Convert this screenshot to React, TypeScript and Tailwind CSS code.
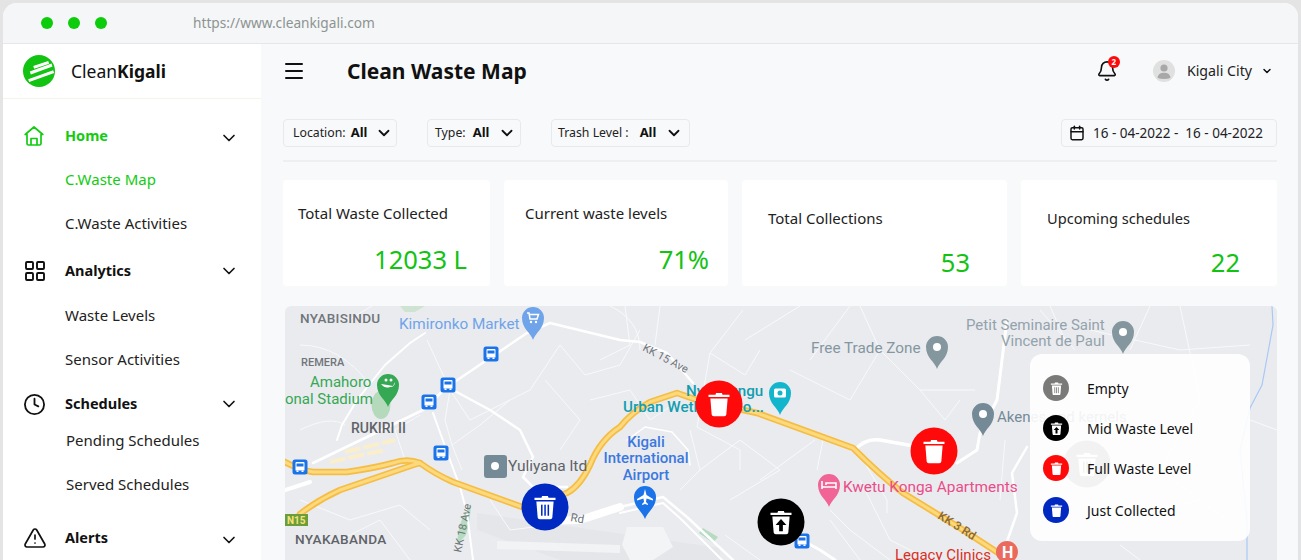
import React from 'react'
import { Bell, Calendar, ChevronDown, Clock, LayoutGrid, Menu, TriangleAlert } from 'lucide-react'

const navRows = [
  { label: 'Home', kind: 'head', active: true, icon: 'home', cls: 'h-[44px]', low: true },
  { label: 'C.Waste Map', kind: 'sub', active: true, cls: 'h-[44px]' },
  { label: 'C.Waste Activities', kind: 'sub', cls: 'h-[44px]' },
  { label: 'Analytics', kind: 'head', icon: 'grid', cls: 'h-[44px] mt-[3px]' },
  { label: 'Waste Levels', kind: 'sub', cls: 'h-[44px] mt-[1px]' },
  { label: 'Sensor Activities', kind: 'sub', cls: 'h-[44px]' },
  { label: 'Schedules', kind: 'head', icon: 'clock', cls: 'h-[44px]' },
  { label: 'Pending Schedules', kind: 'sub', cls: 'h-[30px]', nudge: true },
  { label: 'Served Schedules', kind: 'sub', cls: 'h-[44px] mt-[7px]', nudge: true },
  { label: 'Alerts', kind: 'head', icon: 'alert', cls: 'h-[44px] mt-[9px]', low: true },
]

const stats = [
  { title: 'Total Waste Collected', value: '12033 L', cls: 'w-[207px] pl-[15px] pr-[23px] pt-[23px]', gap: 'mt-[20px]', size: 'text-[15px]' },
  { title: 'Current waste levels', value: '71%', cls: 'w-[224px] pl-[21px] pr-[19px] pt-[23px]', gap: 'mt-[20px]', size: 'text-[15px]' },
  { title: 'Total Collections', value: '53', cls: 'w-[265px] pl-[26px] pr-[37px] pt-[28px]', gap: 'mt-[18px]', size: 'text-[15px]' },
  { title: 'Upcoming schedules', value: '22', cls: 'w-[256px] pl-[26px] pr-[37px] pt-[28px]', gap: 'mt-[18px]', size: 'text-[14.6px]' },
]

const busStops = [[491, 354], [448, 385], [429, 402], [441, 453], [300, 467], [802, 541]]

const HIGHWAY = 'M285 462 Q300 470 313 472 L347 472 Q375 468 393 463 Q407 458 420 463 Q435 474 453 482 L525 508 L567 493 Q580 486 590 465 Q600 440 620 427 Q632 412 650 402 L677 393 L697 400 L757 413 L853 448 Q880 475 903 493 L960 528 L1003 556'
const BRANCH = 'M300 514 Q318 500 340 490 L413 465 L420 463'

const thinRoads = [
  'M345 322 L372 306',
  'M427 340 L450 390 L470 420 L530 390 L560 345',
  'M450 390 L445 420 L452 445 L480 425 L510 400',
  'M452 445 L462 470',
  'M405 460 L395 430 L420 415',
  'M300 345 Q340 345 370 385',
  'M300 430 Q330 415 345 425',
  'M560 345 L585 375 L620 365 L640 330',
  'M590 400 L630 390 L650 420 L680 400',
  'M600 360 L630 345 L625 306',
  'M545 380 L580 420 L560 450',
  'M300 500 L350 520 L400 505 L430 530',
  'M340 540 L380 520 L410 560',
  'M490 500 L510 530 L590 520',
  'M610 306 Q640 320 640 350',
  'M660 306 L655 345',
  'M697 427 L710 353 L743 310',
  'M745 340 L800 306',
  'M710 353 L745 375 L760 350',
  'M790 370 L850 400 L880 350 L920 390 L975 390',
  'M810 360 L850 306',
  'M880 350 L860 306',
  'M700 470 L740 440 L780 470 L730 500',
  'M697 427 L740 450 L740 470',
  'M760 480 L815 440',
  'M823 440 L817 470',
  'M690 430 L700 470 L680 490',
  'M725 535 L760 560',
  'M830 520 L860 560',
  'M863 460 L887 500 L887 513',
  'M860 480 L890 540 L930 560',
  'M830 510 L850 530 L890 560',
  'M920 390 L945 420 L960 400',
  'M1040 310 L1075 350',
  'M1090 330 L1180 350 L1250 345',
  'M1180 306 L1200 400 L1160 470 L1240 530',
  'M1100 520 L1200 500',
  'M1000 500 L1005 440',
  'M1050 306 L1065 340',
  'M1150 306 L1130 350',
  'M1250 420 L1277 430',
  'M1120 545 L1140 560',
]

function Trash({ kind, size, dark }: { kind: 'plain' | 'bars' | 'up'; size: number; dark: string }) {
  return (
    <svg width={size} height={size} viewBox="0 0 24 24" fill="#fff">
      <path d="M9.5 2.5h5l.5 1.5h6v2H3V4h6z" />
      <path d="M4.6 7.2h14.8l-1.1 13.6c-.1 1-.8 1.7-1.8 1.7H7.5c-1 0-1.7-.7-1.8-1.7z" />
      {kind === 'bars' && (
        <g fill={dark}>
          <rect x="8.6" y="10" width="1.3" height="9.5" />
          <rect x="11.4" y="10" width="1.3" height="9.5" />
          <rect x="14.2" y="10" width="1.3" height="9.5" />
        </g>
      )}
      {kind === 'up' && <path fill={dark} d="M12 9.5l4.6 5h-3v5.5h-3.2v-5.5h-3z" />}
    </svg>
  )
}

function Marker({ x, y, color, kind }: { x: number; y: number; color: string; kind: 'plain' | 'bars' | 'up' }) {
  return (
    <g transform={`translate(${x - 23.5} ${y - 23.5})`}>
      <circle cx="23.5" cy="23.5" r="23.5" fill={color} />
      <g transform="translate(9.5 9.5)">
        <Trash kind={kind} size={28} dark={color} />
      </g>
    </g>
  )
}

function Pin({ x, y, color, children }: { x: number; y: number; color: string; children?: React.ReactNode }) {
  return (
    <g transform={`translate(${x} ${y})`}>
      <path d="M0 22 C-2 15 -11 11 -11 0 A11 11 0 0 1 11 0 C11 11 2 15 0 22Z" fill={color} />
      {children ?? <circle r="4" fill="#fff" />}
    </g>
  )
}

function MapDrawing() {
  return (
    <svg className="w-full h-full block" viewBox="285 306 992 254">
      <rect x="285" y="306" width="992" height="254" fill="#eaebef" />
      <path d="M477 513 L720 548 L720 560 L560 560 L477 530Z" fill="#e5e6ea" />
      <path d="M497 545 L620 549" stroke="#f2f3f5" strokeWidth="8" fill="none" />
      <path d="M627 527 L663 527 L673 547 L653 560 L630 560 L622 545Z" fill="#f3f4f6" />
      <path d="M400 306 h25 l-10 6 h-10z" fill="#cfe3d3" />
      <path d="M466 535 Q472 512 470 505 Q458 520 457 545Z" fill="#b5dcc0" />
      <path d="M703 528 L718 537 L713 543 L699 533Z" fill="#b5dcc0" />
      <ellipse cx="381" cy="405" rx="9.5" ry="14" fill="#b5d9bb" />
      <path d="M345 452 L395 440 M330 462 L385 450" stroke="#fbeecb" strokeWidth="4" strokeDasharray="16 3" fill="none" />

      <g fill="none" stroke="#f8f9fa" strokeWidth="1">
        {thinRoads.map((d, i) => <path key={i} d={d} />)}
      </g>

      <g fill="none" stroke="#fff" strokeLinecap="round" strokeLinejoin="round" strokeWidth="2.5">
        <path d="M337 440 L342 425 L357 400 L385 365 L410 343 L425 333" strokeWidth="2" />
        <path d="M313 463 L423 410 L447 387 L487 360 L527 333 L550 323 L620 340 L640 342 L667 353 L693 383" />
        <path d="M453 390 L490 410 L520 430 L533 457 L523 477 L533 487 L567 487" />
        <path d="M433 413 L450 460 L460 487 L467 513 L473 560" strokeWidth="2" />
        <path d="M285 490 L310 482" strokeWidth="4" />
        <path d="M573 520 L620 507 L663 497 L687 517 L733 560" />
        <path d="M620 513 L663 503 L682 520 L722 560" strokeWidth="2" />
        <path d="M627 440 L645 427 L672 432 L688 450 L690 465" strokeWidth="1.5" />
        <path d="M1007 320 L997 400 L980 433 L977 450 L957 463" strokeWidth="3" />
        <path d="M855 450 Q865 438 880 440 L925 448" strokeWidth="3.5" />
        <path d="M1027 447 L1012 473 L1017 513 L1010 533 L1000 560" strokeWidth="2.5" />
        <path d="M802 540 L820 550 L835 560" strokeWidth="3" />
      </g>

      <path d="M1272 306 L1273 325 L1262 385 L1250 408 L1240 450 L1247 520 L1247 560" fill="none" stroke="#a9c8f5" strokeWidth="1.2" />

      <g fill="none" stroke="#f5bd44" strokeWidth="6.5" strokeLinejoin="round" strokeLinecap="round">
        <path d={HIGHWAY} />
        <path d={BRANCH} />
      </g>
      <g fill="none" stroke="#fdd97e" strokeWidth="3" strokeLinejoin="round" strokeLinecap="round">
        <path d={HIGHWAY} />
        <path d={BRANCH} />
      </g>
      <path d="M540 521 L580 520 L620 507" stroke="#fff" strokeWidth="8" strokeLinecap="round" fill="none" />
      <path d="M285 514 h23 v12 h-23z" fill="#6b9e3a" />

      {busStops.map(([x, y]) => (
        <g key={`${x}-${y}`} transform={`translate(${x} ${y})`}>
          <rect x="-7.5" y="-7.5" width="15" height="15" rx="2.5" fill="#1a73e8" />
          <path d="M-4.5 -4 Q-4.5 -5 -3.5 -5 H3.5 Q4.5 -5 4.5 -4 V3.5 H-4.5Z" fill="#fff" />
          <rect x="-3.5" y="-3.5" width="7" height="3" fill="#1a73e8" />
          <path d="M-3.5 3.5 h2 v1.5 h-2z M1.5 3.5 h2 v1.5 h-2z" fill="#fff" />
        </g>
      ))}

      <Pin x={533} y={318} color="#6fa4ea">
        <path d="M-6 -5 h2 l1 6 h7 l1.5 -4.5 h-9" fill="none" stroke="#fff" strokeWidth="1.5" />
        <circle cx="-2" cy="4" r="1.2" fill="#fff" /><circle cx="3" cy="4" r="1.2" fill="#fff" />
      </Pin>
      <Pin x={388} y={385} color="#34a853">
        <path d="M-7 -1 Q-3 4 2 2 Q7 2 7 -3 L5 1 Q0 0 -7 -1Z" fill="#fff" />
        <circle cx="-2" cy="-5" r="1.5" fill="#fff" /><circle cx="3" cy="-5" r="1.5" fill="#fff" />
      </Pin>
      <Pin x={937} y={347} color="#84979f" />
      <Pin x={1123} y={332} color="#84979f" />
      <Pin x={983} y={414} color="#748a97" />
      <Pin x={780} y={393} color="#12b5cb">
        <rect x="-6" y="-4.5" width="12" height="9" rx="1.5" fill="#fff" />
        <circle r="2.5" fill="#12b5cb" />
      </Pin>
      <Pin x={645} y={497} color="#1a73e8">
        <path d="M0 -8 L1.5 -2 L8 2 L8 3.5 L1.5 1.5 L1 5 L3 7 L3 8 L0 7 L-3 8 L-3 7 L-1 5 L-1.5 1.5 L-8 3.5 L-8 2 L-1.5 -2Z" fill="#fff" />
      </Pin>
      <Pin x={829} y={485} color="#f06595">
        <path d="M-7 -4 V4 M-7 2 H7 V4 M7 2 V-2 H-3 V0" fill="none" stroke="#fff" strokeWidth="1.6" />
      </Pin>
      <rect x="484" y="455" width="23" height="23" rx="3" fill="#748a97" />
      <circle cx="495" cy="466" r="4" fill="#fff" />
      <circle cx="1007" cy="552" r="11" fill="#ea6a5e" />

      <g fontFamily="Roboto, sans-serif">
        <g fill="#70757a" fontWeight="500">
          <text x="300" y="323" fontSize="13.5" letterSpacing="0.3">NYABISINDU</text>
          <text x="301" y="366" fontSize="11">REMERA</text>
          <text x="351" y="433" fontSize="14" fill="#5f6368">RUKIRI II</text>
          <text x="295" y="544" fontSize="13.6" fill="#5f6368" letterSpacing="0.3">NYAKABANDA</text>
        </g>
        <text x="399" y="329" fontSize="15.3" fill="#6fa4ea">Kimironko Market</text>
        <text x="310" y="387" fontSize="15" fill="#34a853">Amahoro</text>
        <text x="285" y="404" fontSize="15" fill="#34a853">onal Stadium</text>
        <text x="508" y="471" fontSize="15.5" fill="#5f6368">Yuliyana ltd</text>
        <text x="811" y="353" fontSize="15.3" fill="#84979f">Free Trade Zone</text>
        <text x="966" y="330" fontSize="15" fill="#93a3ab">Petit Seminaire Saint</text>
        <text x="1001" y="346" fontSize="15" fill="#93a3ab">Vincent de Paul</text>
        <text x="997" y="422" fontSize="15" fill="#748a97">Akenes and kernels</text>
        <text x="686" y="396" fontSize="15.2" fill="#129eaf" fontWeight="500">Nyandungu</text>
        <text x="623" y="412" fontSize="15.2" fill="#129eaf" fontWeight="500">Urban Wetland Eco...</text>
        <g fontSize="15" fill="#3b78e0" fontWeight="500" textAnchor="middle">
          <text x="646" y="447">Kigali</text>
          <text x="646" y="463">International</text>
          <text x="646" y="480">Airport</text>
        </g>
        <text x="843" y="492" fontSize="15.4" fill="#ea4c89">Kwetu Konga Apartments</text>
        <text x="895" y="560" fontSize="15" fill="#d93025">Legacy Clinics</text>
        <text x="1002" y="558" fontSize="16" fontWeight="700" fill="#fff">H</text>
        <text x="287" y="524" fontSize="10" fontWeight="700" fill="#f5e27a">N15</text>
        <text fontSize="11" fill="#70757a" transform="translate(642 350) rotate(28)">KK 15 Ave</text>
        <text fontSize="11" fill="#70757a" transform="translate(461 553) rotate(-78)">KK 18 Ave</text>
        <text fontSize="11.5" fill="#70757a" transform="translate(570 521) rotate(10)">Rd</text>
        <text fontSize="12" fill="#8a6a3a" fontWeight="500" transform="translate(937 518) rotate(32)">KK 3 Rd</text>
      </g>

      <Marker x={719} y={404} color="#ff0a0a" kind="plain" />
      <Marker x={934} y={451} color="#ff0a0a" kind="plain" />
      <Marker x={545} y={507} color="#0029c2" kind="bars" />
      <Marker x={781} y={522} color="#000" kind="up" />
      <Marker x={1087} y={464} color="#7a7a78" kind="bars" />
    </svg>
  )
}

const legendRows = [
  { label: 'Empty', bg: 'bg-[#7a7a78]', color: '#7a7a78', kind: 'bars' as const, cls: '' },
  { label: 'Mid Waste Level', bg: 'bg-black', color: '#000', kind: 'up' as const, cls: '' },
  { label: 'Full Waste Level', bg: 'bg-[#ff0a0a]', color: '#ff0a0a', kind: 'plain' as const, cls: '' },
  { label: 'Just Collected', bg: 'bg-[#0029c2]', color: '#0029c2', kind: 'plain' as const, cls: 'mt-[2px]' },
]

function NavIcon({ icon }: { icon?: string }) {
  if (icon === 'home') {
    return (
      <svg width="22" height="22" viewBox="0 0 22 22" fill="none" stroke="#12cc12" strokeWidth="1.7" strokeLinejoin="round">
        <path d="M11 2 L2.2 9.5 H4 V18.5 Q4 20 5.5 20 H16.5 Q18 20 18 18.5 V9.5 H19.8Z" />
        <path d="M8 20 V13.5 H14 V20" />
      </svg>
    )
  }
  if (icon === 'grid') return <LayoutGrid size={24} strokeWidth={1.9} className="text-[#111]" />
  if (icon === 'clock') return <Clock size={23} strokeWidth={1.9} className="text-[#111]" />
  if (icon === 'alert') return <TriangleAlert size={24} strokeWidth={1.7} className="text-[#111]" />
  return null
}

function Filter({ label, cls, gap, labelGap }: { label: string; cls: string; gap: string; labelGap: string }) {
  return (
    <div className={`h-[28px] flex items-center border border-[#e8e9ec] rounded-[4px] ${cls}`}>
      <span className="text-[12.3px] text-[#222]">{label}</span>
      <span className={`text-[13px] font-bold text-[#111] ${labelGap}`}>All</span>
      <ChevronDown size={18} strokeWidth={2.4} className={`text-[#111] ${gap}`} />
    </div>
  )
}

export default function App() {
  return (
    <div className="w-[1301px] h-[560px] overflow-hidden bg-[#e4e4e4] pt-[3px] px-[3px] font-['Noto_Sans',sans-serif]">
      <div className="h-[557px] rounded-t-[14px] overflow-hidden flex flex-col bg-[#f8f9fb]">
        <div className="h-[41px] shrink-0 flex items-center bg-[#f5f6f8] border-b border-[#e6e7ea]">
          <div className="flex gap-[15px] ml-[38px]">
            <span className="w-[12px] h-[12px] rounded-full bg-[#0ccc0c]" />
            <span className="w-[12px] h-[12px] rounded-full bg-[#0ccc0c]" />
            <span className="w-[12px] h-[12px] rounded-full bg-[#0ccc0c]" />
          </div>
          <span className="ml-[86px] text-[13.7px] text-[#8c9490]">https://www.cleankigali.com</span>
        </div>

        <div className="flex flex-1 min-h-0">
          <aside className="w-[258px] shrink-0 bg-white">
            <div className="h-[55px] flex items-center pl-[20px] border-b border-[#f4f5e6]">
              <svg width="32" height="32" viewBox="0 0 32 32">
                <circle cx="16" cy="16" r="16" fill="#12c312" />
                <g stroke="#fff" strokeWidth="3" fill="none">
                  <path d="M10.7 12.3 L25.7 7.3" />
                  <path d="M7.3 18 L29 10" />
                  <path d="M5.7 25.7 L30.7 16.7" />
                </g>
              </svg>
              <span className="ml-[16px] text-[17.5px] text-[#111]">Clean<b className="font-bold">Kigali</b></span>
            </div>
            <nav className="pt-[15px]">
              {navRows.map((row) => (
                <div key={row.label} className={`flex items-center relative ${row.cls}`}>
                  {row.kind === 'head' ? (
                    <>
                      <div className="w-[62px] pl-[20px] flex items-center shrink-0">
                        <NavIcon icon={row.icon} />
                      </div>
                      <span className={`text-[14.5px] font-bold ${row.active ? 'text-[#12cc12]' : 'text-[#111]'}`}>{row.label}</span>
                      <ChevronDown size={20} strokeWidth={2} className={`text-[#111] ml-auto mr-[22px] ${row.low ? 'mt-[4px]' : 'mt-0'}`} />
                    </>
                  ) : (
                    <span className={`text-[15px] mb-[2px] ${row.nudge ? 'pl-[63px]' : 'pl-[62px]'} ${row.active ? 'text-[#12cc12]' : 'text-[#222]'}`}>{row.label}</span>
                  )}
                </div>
              ))}
            </nav>
          </aside>

          <main className="flex-1 min-w-0 pl-[22px] pr-[21px]">
            <header className="h-[54px] flex items-center">
              <Menu size={24} strokeWidth={2} className="text-[#111] -ml-[1px]" />
              <h1 className="ml-[41px] mt-[1px] text-[21px] font-bold text-[#111]">Clean Waste Map</h1>
              <div className="ml-auto relative mr-[35px]">
                <Bell size={22} strokeWidth={1.8} className="text-[#111]" />
                <span className="absolute -top-[4px] right-[-2px] w-[12px] h-[12px] rounded-full bg-[#ff0a0a] text-white text-[8px] font-bold flex items-center justify-center">2</span>
              </div>
              <span className="w-[22px] h-[22px] rounded-full bg-[#e0e0e0] flex items-center justify-center overflow-hidden">
                <svg width="22" height="22" viewBox="0 0 22 22" fill="#a8a8a8">
                  <circle cx="11" cy="8" r="3.6" />
                  <path d="M4.5 18 Q5 12.8 11 12.8 Q17 12.8 17.5 18 Q11 20 4.5 18Z" />
                </svg>
              </span>
              <span className="ml-[12px] text-[14.2px] text-[#222]">Kigali City</span>
              <ChevronDown size={12} strokeWidth={3} className="text-[#111] ml-[9px] mr-[4px]" />
            </header>

            <div className="mt-[21px] flex items-center">
              <Filter label="Location:" cls="w-[114px] pl-[9px]" labelGap="ml-[5px]" gap="ml-[8px]" />
              <Filter label="Type:" cls="w-[94px] ml-[30px] pl-[7px]" labelGap="ml-[7px]" gap="ml-[9px]" />
              <Filter label="Trash Level :" cls="w-[139px] ml-[30px] pl-[6px]" labelGap="ml-[11px]" gap="ml-[9px]" />
              <div className="ml-auto h-[28px] w-[216px] flex items-center border border-[#e8e9ec] rounded-[4px] pl-[7px]">
                <Calendar size={16} strokeWidth={2.2} className="text-[#111]" />
                <span className="ml-[8px] text-[13.5px] text-[#222] whitespace-pre">16 - 04-2022 -  16 - 04-2022</span>
              </div>
            </div>

            <div className="mt-[13px] h-[2px] bg-[#eeeff2]" />

            <div className="mt-[18px] flex gap-[14px]">
              {stats.map((s) => (
                <div key={s.title} className={`h-[106px] rounded-[4px] bg-white ${s.cls}`}>
                  <p className={`leading-[20px] text-[#222] ${s.size}`}>{s.title}</p>
                  <p className={`text-right text-[25.5px] leading-[32px] text-[#12c312] ${s.gap}`}>{s.value}</p>
                </div>
              ))}
            </div>

            <div className="mt-[20px] ml-[2px] h-[254px] rounded-t-[6px] overflow-hidden relative">
              <MapDrawing />
              <div className="absolute left-[745px] top-[48px] w-[220px] h-[187px] rounded-[12px] bg-white/90 pt-[21px] pl-[13px] flex flex-col gap-[14px]">
                {legendRows.map((r) => (
                  <div key={r.label} className={`flex items-center h-[26px] ${r.cls}`}>
                    <span className={`w-[26px] h-[26px] rounded-full flex items-center justify-center ${r.bg}`}>
                      <Trash kind={r.kind} size={15} dark={r.color} />
                    </span>
                    <span className="ml-[18px] text-[14px] text-[#111]">{r.label}</span>
                  </div>
                ))}
              </div>
            </div>
          </main>
        </div>
      </div>
    </div>
  )
}
